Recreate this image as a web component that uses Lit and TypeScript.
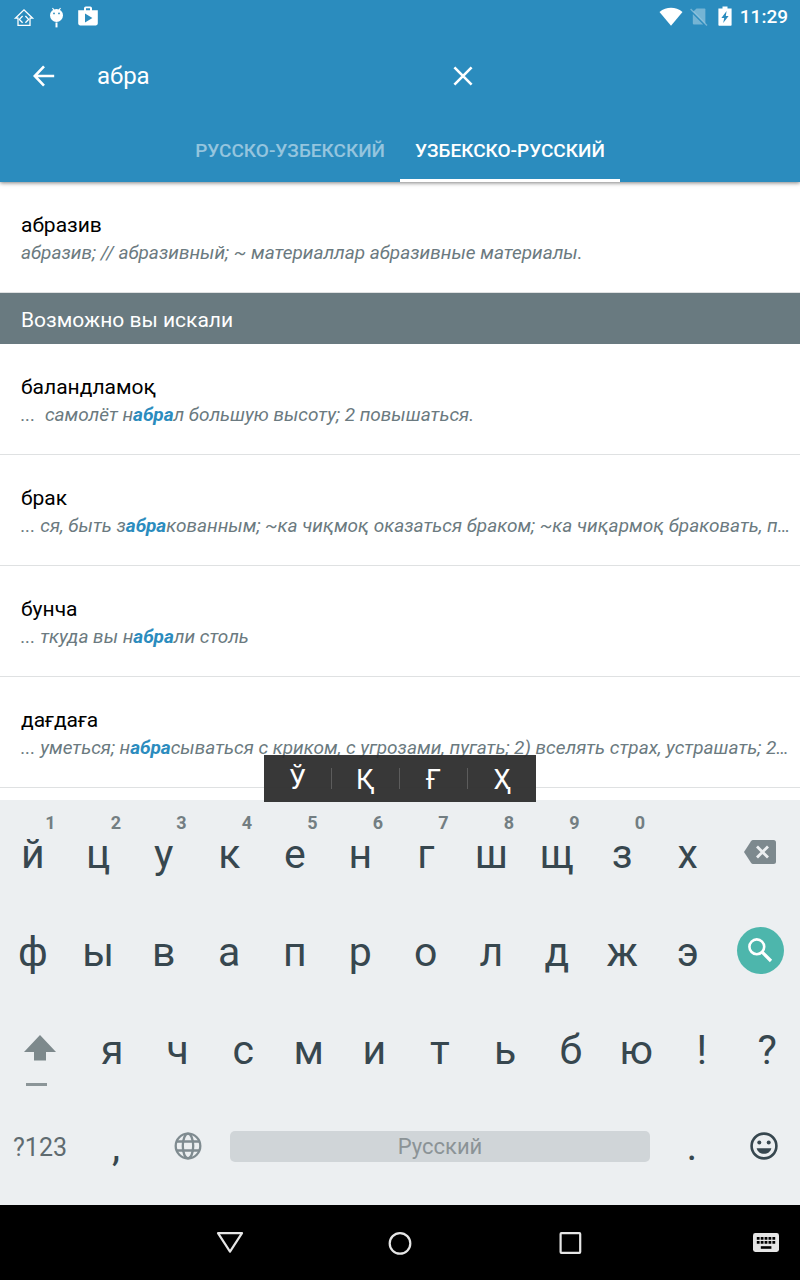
import { LitElement, html, css, svg, nothing } from "lit";
import { customElement, property, state } from "lit/decorators.js";
import { classMap } from "lit/directives/class-map.js";

interface Entry {
  word: string;
  parts: string[];
}

/* Odd items of `parts` are the highlighted matches. */
const FOUND: Entry[] = [
  { word: "абразив", parts: ["абразив; // абразивный; ~ материаллар абразивные материалы."] },
];

const SUGGESTED: Entry[] = [
  { word: "баландламоқ", parts: ["...  самолёт н", "абра", "л большую высоту; 2 повышаться."] },
  {
    word: "брак",
    parts: ["... ся, быть з", "абра", "кованным; ~ка чиқмоқ оказаться браком; ~ка чиқармоқ браковать, при…"],
  },
  { word: "бунча", parts: ["... ткуда вы н", "абра", "ли столь"] },
  {
    word: "дағдаға",
    parts: ["... уметься; н", "абра", "сываться с криком, с угрозами, пугать; 2) вселять страх, устрашать; 2…"],
  },
];

const ROW_1 = [..."йцукенгшщзх"];
const ROW_2 = [..."фывапролджэ"];
const ROW_3 = [..."ячсмитьбю!?"];
const HINTS = [..."1234567890"];

@customElement("status-bar")
class StatusBar extends LitElement {
  static styles = css`
    :host {
      display: flex;
      justify-content: space-between;
      align-items: center;
      height: 33px;
      padding: 0 12px;
    }
    .group {
      display: flex;
      align-items: center;
    }
    .notes {
      gap: 8px;
    }
    .system {
      gap: 3px;
    }
    .time {
      font-size: 19px;
      line-height: 33px;
      font-weight: 500;
    }
    svg {
      display: block;
    }
  `;
  render() {
    return html`
      <div class="group notes">
        <svg width="24" height="24" viewBox="0 0 24 24" fill="none" stroke="#fff" stroke-width="1.3">
          <path d="M3.4 13.2 L12 4.8 L20.6 13.2 H18 V20.3 H6 V13.2 Z" />
          <path d="M10.6 11 L7.4 14.4 L10.6 17.8 M13.4 11 L16.6 14.4 L13.4 17.8" />
        </svg>
        <svg width="24" height="24" viewBox="0 0 24 24" fill="#fff">
          <circle cx="12.5" cy="10.4" r="6.5" />
          <path d="M8.5 3 L10.5 6 M16.5 3 L14.5 6" stroke="#fff" stroke-width="1.2" />
          <path d="M12.5 17.5 V22.4" stroke="#fff" stroke-width="2" />
          <circle cx="10" cy="8.4" r="0.9" fill="#2b8cbe" />
          <circle cx="15" cy="8.4" r="0.9" fill="#2b8cbe" />
        </svg>
        <svg width="24" height="24" viewBox="0 0 24 24">
          <path
            fill="#fff"
            fill-rule="evenodd"
            d="M8 5.2V3.2Q8 1.4 9.8 1.4H14.2Q16 1.4 16 3.2V5.2H21.8V18.6Q21.8 20.4 20 20.4H4Q2.2 20.4 2.2 18.6V5.2ZM10 5.2H14V3.2H10ZM9 8.4V17.4L16.4 12.9Z"
          />
        </svg>
      </div>
      <div class="group system">
        <svg width="24" height="24" viewBox="0 0 24 24" fill="#fff">
          <path d="M0.5 7C7.5 1.4 16.5 1.4 23.5 7L12 20.8Z" />
        </svg>
        <svg width="24" height="24" viewBox="0 0 24 24">
          <path fill="#fff" fill-opacity="0.35" d="M10.5 3.4H18.5Q19.4 3.4 19.4 4.4V18.4L7.4 6.4Z" />
          <path fill="#fff" fill-opacity="0.35" d="M6.8 9L17.2 19.4H8Q6.8 19.4 6.8 18.4Z" />
          <path stroke="#fff" stroke-opacity="0.35" stroke-width="1.4" d="M4.6 4L21 20.4" />
        </svg>
        <svg width="24" height="24" viewBox="0 0 24 24">
          <path
            fill="#fff"
            fill-rule="evenodd"
            d="M9.5 1.6H14.5V3.6H18.6V20Q18.6 20.8 17.8 20.8H6.2Q5.4 20.8 5.4 20V3.6H9.5ZM13.6 6L8.4 13H11.2L10.2 18L15.6 11H12.8Z"
          />
        </svg>
        <span class="time">11:29</span>
      </div>
    `;
  }
}

@customElement("entry-row")
class EntryRow extends LitElement {
  @property({ attribute: false }) entry!: Entry;
  static styles = css`
    :host {
      display: block;
      padding: 30px 0 26px 21px;
      border-bottom: 1px solid #dfe1e2;
    }
    .word,
    .meaning {
      margin: 0;
      line-height: 27px;
      white-space: pre;
      overflow: hidden;
      text-overflow: ellipsis;
    }
    .word {
      font-size: 21px;
      font-weight: 400;
      color: #000;
    }
    .meaning {
      font-size: 19px;
      font-style: italic;
      color: #6b7a80;
    }
    .hit {
      color: #2b8cbe;
      font-weight: 700;
    }
  `;
  render() {
    return html`<h3 class="word">${this.entry.word}</h3>
      <p class="meaning">${this.entry.parts.map((p, i) => (i % 2 ? html`<b class="hit">${p}</b>` : p))}</p>`;
  }
}

@customElement("soft-keyboard")
class SoftKeyboard extends LitElement {
  static styles = css`
    :host {
      display: block;
      position: relative;
      padding: 3px 0 10px;
      background: #eceff1;
      color: #37474f;
    }
    .row {
      display: flex;
      height: 98px;
    }
    button {
      position: relative;
      display: flex;
      align-items: center;
      justify-content: center;
      min-width: 0;
      padding: 0;
      border: 0;
      background: none;
      color: inherit;
      font: inherit;
    }
    .key {
      flex: 131 1 0;
      padding-top: 3px;
      font-size: 41px;
      line-height: 48px;
    }
    .side {
      flex: 159 1 0;
    }
    .small {
      flex: 72 1 0;
      font-size: 41px;
      line-height: 48px;
    }
    .mode {
      flex: 80 1 0;
      padding-top: 3px;
      font-size: 25px;
      color: #5f6b70;
    }
    .space {
      flex: 432 1 0;
    }
    .bar {
      flex: 1;
      height: 31px;
      margin: 0 6px;
      line-height: 31px;
      border-radius: 5px;
      background: #d0d5d8;
      color: #8b9396;
      font-size: 22px;
    }
    .hint {
      position: absolute;
      top: 9px;
      right: 10px;
      font-size: 18px;
      line-height: 22px;
      font-weight: 700;
      color: #737e82;
    }
    .go {
      display: flex;
      align-items: center;
      justify-content: center;
      width: 47px;
      height: 47px;
      border-radius: 50%;
      background: #4db6ac;
    }
    .lock {
      position: absolute;
      left: 26px;
      bottom: 11px;
      width: 21px;
      height: 3px;
      background: #8b9598;
    }
    .extra {
      position: absolute;
      bottom: 100%;
      left: 50%;
      transform: translate(-50%, 2px);
      display: flex;
      align-items: center;
      height: 47px;
      background: rgba(45, 45, 45, 0.95);
      color: #fff;
    }
    .letter {
      width: 68px;
      height: 21px;
      padding-top: 4px;
      font-size: 27px;
      line-height: 21px;
    }
    .letter:not(:last-child) {
      border-right: 1px solid #5c5c5c;
    }
    svg {
      display: block;
    }
  `;
  render() {
    return html`
      <div class="extra">
        ${["Ў", "Қ", "Ғ", "Ҳ"].map((c) => html`<button class="letter">${c}</button>`)}
      </div>
      <div class="row">
        ${ROW_1.map(
          (c, i) => html`<button class="key">
            ${c}${HINTS[i] ? html`<span class="hint">${HINTS[i]}</span>` : nothing}
          </button>`
        )}
        <button class="side" aria-label="Удалить">
          <svg width="32" height="24" viewBox="0 0 32 24">
            <path fill="#7d898e" d="M9 0H29.5Q32 0 32 2.5V21.5Q32 24 29.5 24H9Q7.8 24 7 22.8L0 12L7 1.2Q7.8 0 9 0Z" />
            <path stroke="#eceff1" stroke-width="2.8" d="M13 6.5L24 17.5M24 6.5L13 17.5" />
          </svg>
        </button>
      </div>
      <div class="row">
        ${ROW_2.map((c) => html`<button class="key">${c}</button>`)}
        <button class="side" aria-label="Поиск">
          <span class="go">
            <svg width="26" height="26" viewBox="0 0 26 26" fill="none" stroke="#fff">
              <circle cx="9.8" cy="9.8" r="7.4" stroke-width="2.6" />
              <path stroke-width="3.2" d="M15.2 15.2L24 24" />
            </svg>
          </span>
        </button>
      </div>
      <div class="row">
        <button class="side" aria-label="Shift">
          <svg width="32" height="26" viewBox="0 0 32 26">
            <path fill="#7d898c" d="M16 0L32 17H22V25.5H10V17H0Z" />
          </svg>
          <span class="lock"></span>
        </button>
        ${ROW_3.map((c) => html`<button class="key">${c}</button>`)}
      </div>
      <div class="row">
        <button class="mode">?123</button>
        <button class="small">,</button>
        <button class="small" aria-label="Язык">
          <svg width="28" height="28" viewBox="0 0 28 28" fill="none" stroke="#7f8b90" stroke-width="2.3">
            <circle cx="14" cy="14" r="12.3" />
            <ellipse cx="14" cy="14" rx="5.2" ry="12.3" />
            <path d="M2.6 9.5H25.4M2.6 18.5H25.4" />
          </svg>
        </button>
        <button class="space"><span class="bar">Русский</span></button>
        <button class="small">.</button>
        <button class="small" aria-label="Эмодзи">
          <svg width="28" height="28" viewBox="0 0 28 28" fill="#37474f">
            <circle cx="14" cy="14" r="12.4" fill="none" stroke="#37474f" stroke-width="2.6" />
            <circle cx="9.3" cy="10.6" r="2" />
            <circle cx="18.7" cy="10.6" r="2" />
            <path d="M6.6 16.2H21.4C20.4 19.8 17.6 21.8 14 21.8C10.4 21.8 7.6 19.8 6.6 16.2Z" />
          </svg>
        </button>
      </div>
    `;
  }
}

@customElement("nav-bar")
class NavBar extends LitElement {
  static styles = css`
    :host {
      display: grid;
      grid-template-columns: 1fr 170px 170px 170px 1fr;
      height: 75px;
      background: #000;
    }
    button {
      display: flex;
      align-items: center;
      justify-content: center;
      padding: 0;
      border: 0;
      background: none;
    }
    .back {
      grid-column: 2;
    }
    .ime {
      justify-content: flex-end;
      padding-right: 21px;
    }
  `;
  render() {
    const shape = (content: unknown) => html`<svg
      width="28"
      height="24"
      viewBox="0 0 28 24"
      fill="none"
      stroke="#e6e6e6"
      stroke-width="2.2"
      stroke-linejoin="round"
    >
      ${content}
    </svg>`;
    return html`
      <button class="back" aria-label="Назад">${shape(svg`<path d="M2 2.2H26L14 20.6Z" />`)}</button>
      <button aria-label="Домой">${shape(svg`<circle cx="14" cy="12.4" r="10.3" />`)}</button>
      <button aria-label="Обзор">${shape(svg`<rect x="4.6" y="2.2" width="19.6" height="19.6" rx="0.8" />`)}</button>
      <button class="ime" aria-label="Клавиатура">
        <svg width="26" height="19" viewBox="0 0 26 19">
          <rect width="26" height="19" rx="2.4" fill="#e6e6e6" />
          <path stroke="#000" stroke-width="2.8" stroke-dasharray="2.8 1.1" d="M3.8 5.4H22.4M3.8 9.4H22.4" />
          <path stroke="#000" stroke-width="2.6" d="M7.8 14.5H18.4" />
        </svg>
      </button>
    `;
  }
}

@customElement("app-root")
class AppRoot extends LitElement {
  @state() private query = "абра";
  @state() private active = 1;
  static styles = css`
    :host {
      display: flex;
      flex-direction: column;
      height: 100vh;
      font-family: Roboto, "Noto Sans", sans-serif;
      background: #fff;
    }
    .top {
      position: relative;
      z-index: 1;
      flex: none;
      background: #2b8cbe;
      color: #fff;
      box-shadow: 0 1px 4px rgba(0, 0, 0, 0.5);
    }
    .search {
      display: flex;
      align-items: center;
      height: 85px;
      max-width: 492px;
    }
    button {
      padding: 0;
      border: 0;
      background: none;
      color: inherit;
      font: inherit;
    }
    .icon {
      display: flex;
      align-items: center;
      justify-content: center;
      flex: none;
      width: 58px;
      height: 58px;
    }
    .back {
      width: 87px;
    }
    .query {
      flex: 1;
      min-width: 0;
      padding: 0 10px;
      border: 0;
      outline: 0;
      background: none;
      color: inherit;
      font-family: inherit;
      font-size: 24px;
      line-height: 32px;
    }
    .tabs {
      display: flex;
      justify-content: center;
      height: 64px;
    }
    .tab {
      padding: 3px 15px 0;
      border-bottom: 3px solid transparent;
      font-size: 19px;
      font-weight: 500;
      color: rgba(255, 255, 255, 0.5);
    }
    .active {
      color: #fff;
      border-color: #fff;
    }
    .results {
      flex: 1;
      min-height: 0;
      overflow: hidden;
    }
    .section {
      margin: 0;
      padding: 3px 0 0 21px;
      background: #697a80;
      color: #fff;
      font-size: 21px;
      font-weight: 400;
      line-height: 48px;
    }
    soft-keyboard,
    nav-bar {
      flex: none;
    }
  `;
  render() {
    const tabs = ["РУССКО-УЗБЕКСКИЙ", "УЗБЕКСКО-РУССКИЙ"];
    return html`
      <header class="top">
        <status-bar></status-bar>
        <div class="search">
          <button class="icon back" aria-label="Назад">
            <svg width="22" height="22" viewBox="0 0 22 22" fill="none" stroke="#fff" stroke-width="2.6">
              <path d="M11 1.4L1.8 11L11 20.6M1.8 11H21.2" />
            </svg>
          </button>
          <input
            class="query"
            type="text"
            aria-label="Поиск"
            .value=${this.query}
            @input=${(e: Event) => (this.query = (e.target as HTMLInputElement).value)}
          />
          <button class="icon" aria-label="Очистить" @click=${() => (this.query = "")}>
            <svg width="20" height="20" viewBox="0 0 20 20" stroke="#fff" stroke-width="2.6">
              <path d="M1.4 1.4L18.6 18.6M18.6 1.4L1.4 18.6" />
            </svg>
          </button>
        </div>
        <nav class="tabs">
          ${tabs.map(
            (t, i) => html`<button class=${classMap({ tab: true, active: i === this.active })} @click=${() => (this.active = i)}>
              ${t}
            </button>`
          )}
        </nav>
      </header>
      <main class="results">
        ${FOUND.map((e) => html`<entry-row .entry=${e}></entry-row>`)}
        <h2 class="section">Возможно вы искали</h2>
        ${SUGGESTED.map((e) => html`<entry-row .entry=${e}></entry-row>`)}
      </main>
      <soft-keyboard></soft-keyboard>
      <nav-bar></nav-bar>
    `;
  }
}
